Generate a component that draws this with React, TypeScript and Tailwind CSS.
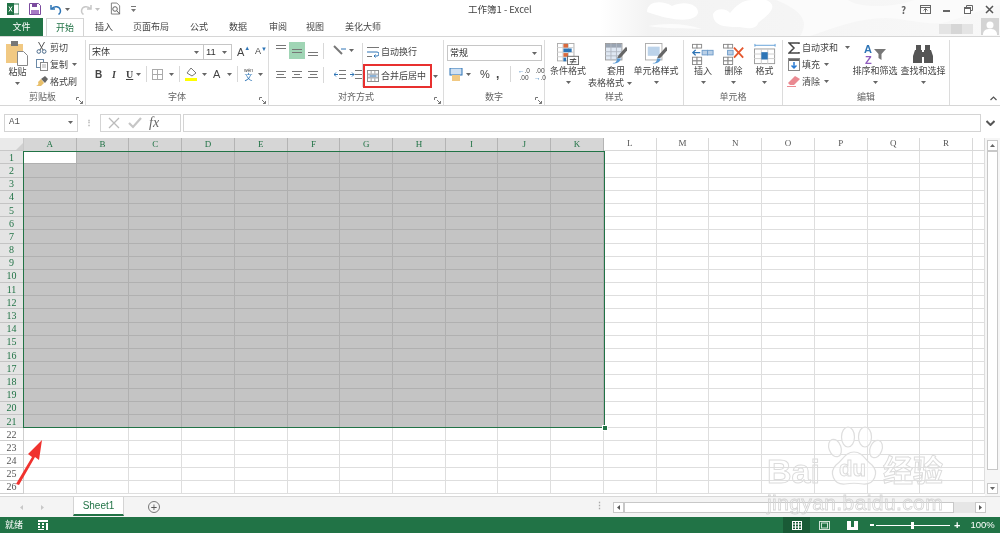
import React from "react";

const font = "font-['Noto_Sans_CJK_SC','Liberation_Sans',sans-serif]";
const Caret = ({ c = "" }: { c?: string }) => (
  <svg width="5" height="3" viewBox="0 0 5 3" className={"shrink-0 " + c}><path d="M0 0h5L2.500 3z" fill="#666" /></svg>
);
const Lines = ({ a = [10, 10, 10] }: { a?: number[] }) => (
  <span className="flex flex-col items-center gap-[2px]">
    {a.map((w, i) => <span key={i} className="h-px bg-[#777] block" style={{ width: w }} />)}
  </span>
);
const Sep = ({ c = "h-[16px]" }: { c?: string }) => <span className={"w-px bg-[#d8d8d8] shrink-0 " + c} />;
const Launcher = () => (
  <svg width="7" height="7" viewBox="0 0 7 7" className="shrink-0"><path d="M.5 3V.5H3M3 3l3.500 3.500M6.500 4v2.500H4" fill="none" stroke="#777" /></svg>
);

const Group = ({ w, label, launcher, children }: { w: string; label: string; launcher?: boolean; children: React.ReactNode }) => (
  <div className={"flex flex-col h-full border-r border-[#dcdcdc] shrink-0 " + w}>
    <div className="flex-1 flex min-h-0">{children}</div>
    <div className="h-[14px] flex items-center justify-center relative text-[9px] text-[#666] pb-[2px]">
      {label}
      {launcher && <span className="absolute right-[2px] bottom-[1px] flex"><Launcher /></span>}
    </div>
  </div>
);

const Big = ({ w, icon, l1, l2, caret2 }: { w: string; icon: React.ReactNode; l1: string; l2?: string; caret2?: boolean }) => (
  <div className={"flex flex-col items-center shrink-0 pt-[3px] " + w}>
    <div className="h-[22px] flex items-center justify-center">{icon}</div>
    <div className="text-[9px] leading-[12px] text-[#444] whitespace-nowrap">{l1}</div>
    {l2 ? (
      <div className="text-[9px] leading-[12px] text-[#444] whitespace-nowrap flex items-center gap-[3px] mr-[12px]">{l2}{caret2 && <Caret />}</div>
    ) : (
      <div className="h-[10px] flex items-center"><Caret /></div>
    )}
  </div>
);

const Small = ({ icon, label, caret, c = "" }: { icon: React.ReactNode; label: string; caret?: boolean; c?: string }) => (
  <div className={"flex items-center h-[17px] text-[9px] text-[#444] whitespace-nowrap " + c}>
    <span className="w-[17px] flex justify-center shrink-0">{icon}</span>
    {label}
    {caret && <Caret c="ml-[4px]" />}
  </div>
);

const Scissors = () => (
  <svg width="11" height="12" viewBox="0 0 11 12" fill="none" stroke="#4a6a8a"><path d="M2.500 0 7 8M8.500 0 4 8" stroke="#555" /><circle cx="2.800" cy="9.500" r="1.800" /><circle cx="8.200" cy="9.500" r="1.800" /></svg>
);
const CopyI = () => (
  <svg width="12" height="12" viewBox="0 0 12 12" fill="#fff" stroke="#6b8aa8"><rect x=".5" y=".5" width="7" height="8" /><rect x="4.500" y="3.500" width="7" height="8" stroke="#888" /><path d="M6 6h4M6 8h4" stroke="#aaa" /></svg>
);
const Brush = () => (
  <svg width="12" height="11" viewBox="0 0 12 11"><path d="M5 3l4-3 3 3-3 4z" fill="#666" /><path d="M5 3l3 4-3 3H0c2-1 3-2 2-4z" fill="#e8bf6a" /></svg>
);
const Paste = () => (
  <svg width="23" height="25" viewBox="0 0 23 25"><rect x="0" y="3" width="17" height="19" fill="#f1c983" /><rect x="5" y="0" width="7" height="5" fill="#777" /><path d="M11.500 10.500h6l4 4v10h-10z" fill="#fff" stroke="#888" /></svg>
);

const Sigma = () => <svg width="12" height="12" viewBox="0 0 12 12"><path d="M11 2V1H1l5 5-5 5h10v-1" fill="none" stroke="#444" strokeWidth="1.500" /></svg>;
const Fill = () => <svg width="12" height="13" viewBox="0 0 12 13"><rect x=".5" y=".5" width="11" height="12" fill="#fff" stroke="#888" /><rect x="1" y="1" width="10" height="2" fill="#666" /><path d="M6 4v6M3.500 7.500 6 10l2.500-2.500" fill="none" stroke="#2b7cd3" strokeWidth="1.500" /></svg>;
const Eraser = () => <svg width="13" height="11" viewBox="0 0 13 11"><path d="M8 0l5 3-6 6H3L1 7z" fill="#ea8a92" /><path d="M0 10.500h9" stroke="#ea8a92" /></svg>;

const GridI = ({ children }: { children?: React.ReactNode }) => (
  <svg width="22" height="22" viewBox="0 0 24 24">{children}</svg>
);

const CondFmt = () => (
  <GridI>
    <rect x=".5" y=".5" width="18" height="19" fill="#fff" stroke="#aaa" />
    <path d="M6.500 0v20M12.500 0v20M0 5h18M0 10h18M0 15h18" stroke="#ccc" />
    <rect x="7" y="1" width="5" height="4" fill="#d9693c" /><rect x="7" y="6" width="9" height="4" fill="#2e75b6" /><rect x="7" y="11" width="5" height="4" fill="#d9693c" /><rect x="7" y="16" width="3" height="4" fill="#2e75b6" />
    <rect x="11.500" y="14.500" width="12" height="9" fill="#fff" stroke="#666" />
    <path d="M14 18h7M14 20.500h7M19 16.500l-3 6" stroke="#444" fill="none" />
  </GridI>
);
const TableFmt = () => (
  <GridI>
    <rect x=".5" y=".5" width="18" height="18" fill="#dfe8f3" stroke="#999" />
    <rect x="1" y="1" width="17" height="4" fill="#9aa5b3" />
    <path d="M6.500 0v18M12.500 0v18M0 9.500h18M0 14h18" stroke="#b0b8c2" />
    <path d="M23 4 15 13l-2 4 4-1 8-9z" fill="#666" /><path d="M8 22c3 0 5-1 5-5l4 0c0 4-4 6-9 5z" fill="#5b9bd5" />
  </GridI>
);
const CellFmt = () => (
  <GridI>
    <rect x=".5" y=".5" width="18" height="18" fill="#fff" stroke="#aaa" />
    <rect x="3" y="4" width="13" height="10" fill="#bcd3ea" />
    <path d="M23 4 15 13l-2 4 4-1 8-9z" fill="#666" /><path d="M8 22c3 0 5-1 5-5l4 0c0 4-4 6-9 5z" fill="#5b9bd5" />
  </GridI>
);
const InsertI = () => (
  <GridI>
    <g fill="#fff" stroke="#888"><rect x=".5" y="1.500" width="5" height="4" /><rect x="5.500" y="1.500" width="5" height="4" /><rect x=".5" y="15.500" width="5" height="4" /><rect x="5.500" y="15.500" width="5" height="4" /><rect x=".5" y="19.500" width="5" height="4" /><rect x="5.500" y="19.500" width="5" height="4" /></g>
    <rect x="11" y="8" width="6" height="5" fill="#b9cfe6" stroke="#6b9ac9" /><rect x="17" y="8" width="6" height="5" fill="#b9cfe6" stroke="#6b9ac9" />
    <path d="M9 10.500H1M4 7.500l-3 3 3 3" fill="none" stroke="#2e75b6" strokeWidth="1.500" />
  </GridI>
);
const DeleteI = () => (
  <GridI>
    <g fill="#fff" stroke="#888"><rect x=".5" y="1.500" width="5" height="4" /><rect x="5.500" y="1.500" width="5" height="4" /><rect x=".5" y="15.500" width="5" height="4" /><rect x="5.500" y="15.500" width="5" height="4" /><rect x=".5" y="19.500" width="5" height="4" /><rect x="5.500" y="19.500" width="5" height="4" /></g>
    <rect x="5" y="8" width="6" height="5" fill="#b9cfe6" stroke="#6b9ac9" />
    <path d="M12 5l10 11M22 5 12 16" stroke="#e4572e" strokeWidth="2" />
  </GridI>
);
const FormatI = () => (
  <GridI>
    <path d="M1 2.500h22M1 1v3M23 1v3" stroke="#5b9bd5" />
    <rect x=".5" y="6.500" width="22" height="16" fill="#fff" stroke="#999" />
    <path d="M8 6v17M15 6v17M0 12h23M0 17h23" stroke="#ccc" />
    <rect x="8" y="10" width="7" height="8" fill="#2e75b6" />
  </GridI>
);
const SortI = () => (
  <svg width="22" height="22" viewBox="0 0 22 22">
    <text x="0" y="10" fontSize="11" fontWeight="700" fill="#2e75b6" fontFamily="Liberation Sans">A</text>
    <text x="1" y="21" fontSize="11" fontWeight="700" fill="#8e5bbd" fontFamily="Liberation Sans">Z</text>
    <path d="M10 6h12l-4.500 5v6l-3-2v-4z" fill="#777" />
  </svg>
);
const Bino = () => (
  <svg width="20" height="18" viewBox="0 0 20 18" fill="#555"><rect x="3" y="0" width="5" height="5" /><rect x="12" y="0" width="5" height="5" /><path d="M2 5h7v13H0V11zM11 5h7l2 6v7h-9zM9 7h2v5H9z" /></svg>
);

const Wrap = () => <svg width="12" height="12" viewBox="0 0 12 12" fill="none"><path d="M0 1.500h12M0 10.500h5" stroke="#777" /><path d="M0 6h10q2 0 2 2t-2 2H7M8.500 8.500 7 10l1.500 1.500" stroke="#2e75b6" /></svg>;
const Merge = () => <svg width="12" height="12" viewBox="0 0 13 13"><rect x=".5" y=".5" width="12" height="12" fill="#fff" stroke="#888" /><rect x="1" y="4" width="11" height="5" fill="#dbe6f2" /><path d="M1 4.500h11M1 8.500h11M4.500 1v3M8.500 1v3M4.500 9v3M8.500 9v3" stroke="#999" /><path d="M3 6.500h7" stroke="#2e75b6" /></svg>;

const Cols = ["A", "B", "C", "D", "E", "F", "G", "H", "I", "J", "K", "L", "M", "N", "O", "P", "Q", "R", ""];
const rows = Array.from({ length: 26 }, (_, i) => i + 1);

export default function App() {
  return (
    <div className={"relative w-[1000px] h-[533px] overflow-hidden bg-white flex flex-col text-[#444] blur-[0.4px] " + font}>
      {/* title bar */}
      <div className="h-[18px] shrink-0 flex items-center relative">
        <svg width="400" height="36" viewBox="0 0 400 36" className="absolute right-0 top-0">
          <defs>
            <linearGradient id="cl" x1="0" x2="1" y1="0" y2="0"><stop offset="0" stopColor="#f3f3f3" stopOpacity="0" /><stop offset="0.12" stopColor="#f3f3f3" /><stop offset="1" stopColor="#f8f8f8" /></linearGradient>
          </defs>
          <rect width="400" height="36" fill="url(#cl)" />
          <path d="M47 12C47 1 62 0 72 6 84 0 99 4 98 13 95 22 75 22 47 12z" fill="#fff" />
          <path d="M48 26c18-3 36-3 54 3-18-1-36 0-54-3z" fill="#fcfcfc" />
          <path d="M113 14c4-7 14-5 17-1 6-7 12-13 22-13h14c14 6 2 15-8 23-1 6-10 6-18 4-13 0-27 0-27-13z" fill="#fff" />
          <path d="M176 0h72c12 8 44 8 66 0h86v5c-30 8-34 12-58 18-14 2-42-5-56-5-28 0-52 10-76 18h-10c8-12 6-24-24-36z" fill="#fbfbfb" />
        </svg>
        <span className="w-[7px]" />
        <svg width="12" height="12" viewBox="0 0 12 12" className="relative"><rect x="3" y="1" width="9" height="10" fill="#fff" stroke="#217346" /><rect width="7" height="12" fill="#217346" /><path d="M2 3.500 5 8.500M5 3.500 2 8.500" stroke="#fff" /></svg>
        <span className="w-[10px]" />
        <svg width="12" height="12" viewBox="0 0 12 12"><path d="M.5.500h9l2 2v9H.5z" fill="#fff" stroke="#7b4b9e" /><rect x="3" y="1" width="5" height="3" fill="#7b4b9e" /><rect x="2" y="7" width="8" height="4" fill="#a67bc4" /></svg>
        <span className="w-[9px]" />
        <svg width="12" height="11" viewBox="0 0 12 11" fill="none"><path d="M1 1v4h4" stroke="#2e75b6" strokeWidth="1.500" /><path d="M1.500 5C4 1.500 10 2 10.500 7c0 1.500-1 3-2 3.500" stroke="#2e75b6" strokeWidth="1.500" /></svg>
        <Caret c="ml-[3px]" />
        <span className="w-[10px]" />
        <svg width="12" height="11" viewBox="0 0 12 11" fill="none"><path d="M11 1v4H7M10.500 5C8 1.500 2 2 1.500 7c0 1.500 1 3 2 3.500" stroke="#c8c8c8" strokeWidth="1.500" /></svg>
        <Caret c="ml-[3px] opacity-40" />
        <span className="w-[10px]" />
        <svg width="11" height="14" viewBox="0 0 12 14" fill="none"><path d="M1.500.5h6l3 3v9h-9z" fill="#fff" stroke="#777" /><circle cx="5.500" cy="7" r="2.500" stroke="#555" /><path d="M7.500 9l3 3.500" stroke="#555" /></svg>
        <span className="w-[10px]" />
        <svg width="5" height="6" viewBox="0 0 5 6"><path d="M0 0h5v1H0zM0 3h5L2.500 6z" fill="#777" /></svg>
        <span className="absolute left-[468px] text-[9.5px] text-[#444]">工作簿1 - Excel</span>
        <span className="ml-auto flex items-center text-[#666] relative">
          <span className="w-[15px] text-[10px] font-bold">?</span>
          <svg width="11" height="9" viewBox="0 0 11 9" className="mr-[12px] ml-[4px]" fill="none"><rect x=".5" y=".5" width="10" height="8" stroke="#666" /><path d="M.5 2.500h10" stroke="#666" /><path d="M5.500 7.500V4M3.500 5.500l2-2 2 2" stroke="#666" /></svg>
          <span className="w-[7px] h-[2px] bg-[#666] mr-[14px] mt-[3px]" />
          <svg width="9" height="9" viewBox="0 0 9 9" className="mr-[12px]" fill="none"><path d="M2.500 2V.5h6v5H7" stroke="#666" /><rect x=".5" y="2.500" width="6" height="6" stroke="#666" fill="#fff" /><path d="M.5 3.500h6" stroke="#666" /></svg>
          <svg width="9" height="9" viewBox="0 0 9 9" className="mr-[4px]"><path d="M1 1l7 7M8 1 1 8" stroke="#555" strokeWidth="1.500" /></svg>
          <span className="w-[2px]" />
        </span>
      </div>
      {/* tabs */}
      <div className="h-[18px] shrink-0 flex items-end relative text-[9px] text-[#444]">
        <div className="w-[43px] h-[18px] bg-[#217346] text-white flex items-center justify-center">文件</div>
        <div className="ml-[3px] w-[38px] h-[18px] bg-white border border-b-0 border-[#d4d4d4] text-[#217346] flex items-center justify-center">开始</div>
        <div className="w-[40px] h-[18px] flex items-center justify-center">插入</div>
        <div className="w-[54px] h-[18px] flex items-center justify-center">页面布局</div>
        <div className="w-[42px] h-[18px] flex items-center justify-center">公式</div>
        <div className="w-[36px] h-[18px] flex items-center justify-center">数据</div>
        <div className="w-[44px] h-[18px] flex items-center justify-center">审阅</div>
        <div className="w-[30px] h-[18px] flex items-center justify-center">视图</div>
        <div className="w-[66px] h-[18px] flex items-center justify-center">美化大师</div>
        <div className="absolute right-[27px] bottom-[2px] flex gap-0">
          <span className="w-[12px] h-[10px] bg-[#e4e4e4]" /><span className="w-[11px] h-[10px] bg-[#d6d6d6]" /><span className="w-[11px] h-[10px] bg-[#e4e4e4]" />
        </div>
        <div className="absolute right-[1px] top-0 w-[18px] h-[17px] bg-[#d4d4d4] flex items-end justify-center overflow-hidden">
          <svg width="16" height="15" viewBox="0 0 16 15"><circle cx="8" cy="5" r="3.500" fill="#fff" /><path d="M1 15c0-5 3-6 7-6s7 1 7 6z" fill="#fff" /></svg>
        </div>
      </div>
      {/* ribbon */}
      <div className="h-[70px] shrink-0 flex border-y border-[#d6d6d6] pt-[3px] relative bg-white">
        <Group w="w-[86px]" label="剪贴板" launcher>
          <div className="w-[33px] flex flex-col items-center pt-[1px] pl-[2px]">
            <Paste />
            <div className="text-[9px] leading-[12px]">粘贴</div>
            <div className="h-[10px] flex items-center"><Caret /></div>
          </div>
          <div className="flex flex-col -mt-[1px]">
            <Small icon={<Scissors />} label="剪切" />
            <Small icon={<CopyI />} label="复制" caret />
            <Small icon={<Brush />} label="格式刷" />
          </div>
        </Group>
        <Group w="w-[183px]" label="字体" launcher>
          <div className="flex flex-col pl-[3px] pt-[4px]">
            <div className="flex items-center h-[16px]">
              <div className="w-[115px] h-[16px] border border-[#c6c6c6] flex items-center px-[2px] text-[9px] text-[#333]">宋体<Caret c="ml-auto mr-[2px]" /></div>
              <div className="w-[28px] h-[16px] border border-l-0 border-[#c6c6c6] flex items-center px-[2px] text-[9.5px] text-[#333] font-['Liberation_Sans']">11<Caret c="ml-auto mr-[2px]" /></div>
              <span className="ml-[5px] text-[11px] font-['Liberation_Sans'] w-[18px] flex items-start">A<span className="text-[6px] text-[#2e75b6] leading-[8px]">▲</span></span>
              <span className="text-[9px] font-['Liberation_Sans'] w-[14px] flex items-start">A<span className="text-[6px] text-[#2e75b6] leading-[8px]">▼</span></span>
            </div>
            <div className="flex items-center h-[18px] mt-[5px] text-[#444] font-['Liberation_Serif']">
              <span className="w-[16px] pl-[5px] ml-[1px] text-[10px] font-bold font-['Liberation_Sans']">B</span>
              <span className="w-[17px] pl-[6px] text-[10px] font-bold italic">I</span>
              <span className="w-[13px] pl-[3px] text-[10px] font-bold underline">U</span>
              <Caret c="mr-[5px]" />
              <Sep />
              <svg width="11" height="11" viewBox="0 0 11 11" className="ml-[5px]" fill="none"><rect x=".5" y=".5" width="10" height="10" stroke="#aaa" /><path d="M5.500 0v11M0 5.500h11" stroke="#aaa" /></svg>
              <Caret c="ml-[6px] mr-[5px]" />
              <Sep />
              <svg width="13" height="13" viewBox="0 0 13 13" className="ml-[5px]"><path d="M6 0l5 5-4 3-5-3z" fill="#fff" stroke="#777" /><rect y="10" width="12" height="3" fill="#ffff00" /></svg>
              <Caret c="ml-[4px] mr-[5px]" />
              <span className="text-[11px] font-['Liberation_Sans'] w-[9px] ml-[1px]">A</span>
              <Caret c="ml-[5px] mr-[5px]" />
              <Sep />
              <span className="w-[15px] ml-[3px] flex flex-col items-center leading-[6px] text-[5px] font-['Liberation_Sans']">wén<span className="text-[8px] leading-[8px] text-[#2e75b6] font-['Noto_Sans_CJK_SC']">文</span></span>
              <Caret c="ml-[2px]" />
            </div>
          </div>
        </Group>
        <Group w="w-[175px]" label="对齐方式" launcher>
          <div className="flex flex-col pl-[3px] pt-[2px]">
            <div className="flex items-center h-[17px]">
              <span className="w-[17px] h-[17px] flex justify-center pt-[3px]"><Lines a={[10, 10]} /></span>
              <span className="w-[16px] h-[17px] bg-[#a0d5b5] flex items-center justify-center"><Lines a={[10, 10]} /></span>
              <span className="w-[16px] h-[17px] flex justify-center items-end pb-[3px]"><Lines a={[10, 10]} /></span>
              <Sep c="h-[16px] ml-[2px]" />
              <svg width="13" height="12" viewBox="0 0 13 12" className="ml-[9px]" fill="none"><path d="M1 1l8 8" stroke="#777" strokeWidth="2" /><path d="M8 4h5" stroke="#2e75b6" /></svg>
              <Caret c="ml-[3px]" />
            </div>
            <div className="flex items-center h-[17px] mt-[7px]">
              <span className="w-[17px] flex justify-center"><Lines a={[10, 7, 10]} /></span>
              <span className="w-[16px] flex justify-center"><Lines a={[10, 6, 10]} /></span>
              <span className="w-[16px] flex justify-center"><Lines a={[10, 7, 10]} /></span>
              <Sep c="h-[16px] ml-[2px]" />
              <svg width="12" height="9" viewBox="0 0 12 9" className="ml-[10px]" fill="none"><path d="M5 .5h7M5 4.500h7M5 8.500h7" stroke="#777" /><path d="M4 4.500H0M2 2.500l-2 2 2 2" stroke="#2e75b6" /></svg>
              <svg width="12" height="9" viewBox="0 0 12 9" className="ml-[4px]" fill="none"><path d="M5 .5h7M5 4.500h7M5 8.500h7" stroke="#777" /><path d="M0 4.500h4M2 2.500l2 2-2 2" stroke="#2e75b6" /></svg>
            </div>
          </div>
          <Sep c="h-[44px] mt-[3px]" />
          <div className="flex flex-col pt-[3px]">
            <div className="flex items-center h-[17px] text-[9px] ml-[4px] whitespace-nowrap"><span className="w-[14px] flex"><Wrap /></span>自动换行</div>
            <div className="flex items-center mt-[4px]">
              <div className="w-[69px] h-[24px] border-2 border-[#e8302f] flex items-center pl-[2px] text-[9px] whitespace-nowrap">
                <span className="w-[14px] flex"><Merge /></span>合并后居中
              </div>
              <Caret c="ml-[1px]" />
            </div>
          </div>
        </Group>
        <Group w="w-[101px]" label="数字" launcher>
          <div className="flex flex-col pl-[3px] pt-[5px]">
            <div className="w-[95px] h-[16px] border border-[#c6c6c6] flex items-center px-[2px] text-[9px] text-[#333]">常规<Caret c="ml-auto mr-[2px]" /></div>
            <div className="flex items-center h-[18px] mt-[4px] font-['Liberation_Sans']">
              <svg width="14" height="13" viewBox="0 0 14 13" className="ml-[2px]"><rect x="1" width="12" height="7" fill="#cfe0f2" stroke="#2e75b6" /><rect x="3" y="7" width="8" height="6" fill="#f1c983" /></svg>
              <Caret c="ml-[3px]" />
              <span className="text-[11px] ml-[9px] w-[15px]">%</span>
              <span className="text-[12px] font-bold ml-[1px] w-[14px]">,</span>
              <Sep />
              <span className="ml-[5px] w-[16px] text-[6.5px] leading-[7px] text-center"><span className="text-[#2e75b6]">←</span>.0<br />.00</span>
              <span className="w-[16px] text-[6.5px] leading-[7px] text-center">.00<br /><span className="text-[#2e75b6]">→</span>.0</span>
            </div>
          </div>
        </Group>
        <Group w="w-[139px]" label="样式">
          <Big w="w-[46px]" icon={<CondFmt />} l1="条件格式" />
          <Big w="w-[50px]" icon={<TableFmt />} l1="套用" l2="表格格式" caret2 />
          <Big w="w-[30px]" icon={<CellFmt />} l1="单元格样式" />
        </Group>
        <Group w="w-[99px]" label="单元格">
          <div className="w-[4px]" />
          <Big w="w-[30px]" icon={<InsertI />} l1="插入" />
          <Big w="w-[31px]" icon={<DeleteI />} l1="删除" />
          <Big w="w-[31px]" icon={<FormatI />} l1="格式" />
        </Group>
        <Group w="w-[167px]" label="编辑">
          <div className="flex flex-col w-[70px] pl-[2px] -mt-[1px]">
            <Small icon={<Sigma />} label="自动求和" caret c="[&>svg]:ml-[7px]" />
            <Small icon={<Fill />} label="填充" caret />
            <Small icon={<Eraser />} label="清除" caret />
          </div>
          <Big w="w-[44px]" icon={<SortI />} l1="排序和筛选" />
          <Big w="w-[52px]" icon={<Bino />} l1="查找和选择" />
        </Group>
        <svg width="7" height="5" viewBox="0 0 7 5" className="absolute right-[3px] bottom-[4px]" fill="none"><path d="M.5 4l3-3 3 3" stroke="#555" strokeWidth="1.200" /></svg>
      </div>
      {/* formula bar */}
      <div className="shrink-0 flex items-center pt-[7px] pb-[6px] h-[32px]">
        <div className="ml-[4px] w-[74px] h-[18px] border border-[#d4d4d4] flex items-center px-[4px] text-[9px] text-[#555] font-['Liberation_Mono']">A1<Caret c="ml-auto" /></div>
        <div className="w-[22px] flex justify-center text-[#aaa] text-[8px] font-bold font-['Liberation_Sans']">⋮</div>
        <div className="w-[81px] h-[18px] border border-[#d4d4d4] flex items-center">
          <svg width="12" height="12" viewBox="0 0 12 12" className="ml-[7px]"><path d="M1 1l10 10M11 1 1 11" stroke="#bbb" strokeWidth="1.300" /></svg>
          <svg width="14" height="12" viewBox="0 0 14 12" className="ml-[8px]"><path d="M1 6l4 4 8-9" stroke="#c6c6c6" strokeWidth="2.200" fill="none" /></svg>
          <span className="ml-[7px] text-[14px] leading-[14px] italic font-['Liberation_Serif'] text-[#666]">fx</span>
        </div>
        <div className="ml-[2px] w-[798px] h-[18px] border border-[#d4d4d4]" />
        <svg width="9" height="6" viewBox="0 0 9 6" className="ml-[5px]" fill="none"><path d="M.5 1l4 4 4-4" stroke="#555" strokeWidth="2" /></svg>
      </div>
      {/* sheet */}
      <div className="h-[358px] shrink-0 flex relative overflow-hidden">
        <div className="w-[985px] shrink-0 grid grid-cols-[24px_repeat(18,52.72px)_12px] auto-rows-[13.19px] overflow-hidden content-start">
          <div className="bg-[#eaeaea] border-b border-r border-[#c8c8c8] flex items-end justify-end">
            <svg width="7" height="7" viewBox="0 0 7 7"><path d="M7 0v7H0z" fill="#d0d0d0" /></svg>
          </div>
          {Cols.map((c, i) => (
            <div key={i} className={i < 11
              ? "bg-[#d6d6d6] border-r border-[#b4b4b4] flex items-center justify-center text-[9px] text-[#217346] font-['Liberation_Serif']"
              : "bg-white border-r border-b border-[#d8d8d8] flex items-center justify-center text-[9px] text-[#555] font-['Liberation_Serif']"}>{c}</div>
          ))}
          {rows.map((r) => (
            <React.Fragment key={r}>
              <div className={r <= 21
                ? "bg-[#e4e4e4] border-r border-b border-[#c4c4c4] flex items-center justify-center text-[10px] text-[#217346] font-['Liberation_Serif']"
                : "bg-white border-r border-b border-[#cfcfcf] flex items-center justify-center text-[10px] text-[#555] font-['Liberation_Serif']"}>{r}</div>
              {Cols.map((c, i) => {
                const sel = r <= 21 && i < 11;
                const active = r === 1 && i === 0;
                return (
                  <div key={i} className={active ? "bg-white border-r border-b border-[#b0b0b0]" : sel ? "bg-[#c4c4c4] border-r border-b border-[#b0b0b0]" : "bg-white border-r border-b border-[#dedede]"} />
                );
              })}
            </React.Fragment>
          ))}
        </div>
        <div className="flex-1 flex flex-col bg-[#f6f6f6] px-[2px] pt-[2px]">
          <div className="h-[11px] bg-white border border-[#c8c8c8] flex items-center justify-center"><svg width="5" height="3" viewBox="0 0 5 3"><path d="M2.500 0 5 3H0z" fill="#666" /></svg></div>
          <div className="h-[319px] bg-white border border-[#c8c8c8]" />
          <div className="flex-1" />
          <div className="h-[11px] mb-[2px] bg-white border border-[#c8c8c8] flex items-center justify-center"><Caret /></div>
        </div>
        {/* selection outline */}
        <div className="absolute left-[23px] top-[13px] w-[582px] h-[277px] border border-[#217346] pointer-events-none" />
        <div className="absolute left-[602px] top-[287px] w-[4px] h-[4px] bg-[#217346] border border-white box-content" />
      </div>
      {/* sheet tabs */}
      <div className="h-[21px] shrink-0 flex items-center bg-[#f4f4f4] border-t border-[#d8d8d8]">
        <svg width="3" height="5" viewBox="0 0 3 5" className="ml-[20px]"><path d="M3 0v5L0 2.500z" fill="#c8c8c8" /></svg>
        <svg width="3" height="5" viewBox="0 0 3 5" className="ml-[18px]"><path d="M0 0v5l3-2.500z" fill="#c8c8c8" /></svg>
        <div className="ml-[29px] w-[51px] h-[19px] bg-white border-x border-[#d4d4d4] border-b-2 border-b-[#217346] text-[#217346] text-[10px] flex items-center justify-center font-['Liberation_Sans'] self-start">Sheet1</div>
        <div className="ml-[24px] w-[12px] h-[12px] rounded-full border border-[#777] flex items-center justify-center text-[11px] leading-none text-[#555] font-['Liberation_Sans']">+</div>
        <span className="ml-[435px] text-[#aaa] text-[9px] font-bold font-['Liberation_Sans']">⋮</span>
        <div className="ml-[9px] w-[11px] h-[11px] bg-white border border-[#c8c8c8] flex items-center justify-center"><svg width="3" height="5" viewBox="0 0 3 5"><path d="M3 0v5L0 2.500z" fill="#555" /></svg></div>
        <div className="w-[330px] h-[11px] bg-white border border-[#c8c8c8]" />
        <div className="w-[21px] h-[11px] bg-[#e6e6e6]" />
        <div className="w-[11px] h-[11px] bg-white border border-[#c8c8c8] flex items-center justify-center"><svg width="3" height="5" viewBox="0 0 3 5"><path d="M0 0v5l3-2.500z" fill="#555" /></svg></div>
      </div>
      {/* status bar */}
      <div className="flex-1 bg-[#217346] text-white flex items-center text-[9px] relative">
        <span className="ml-[5px]">就绪</span>
        <svg width="10" height="10" viewBox="0 0 10 10" className="ml-[15px]"><path d="M0 0h10v2H0zM0 3h2v2H0zM4 3h2v2H4zM8 3h2v7H8zM0 6h2v2H0zM4 6h2v2H4zM0 9h6v1H0z" fill="#fff" /></svg>
        <span className="ml-[735px] w-[27px] h-[16px] bg-[#195a36] flex items-center justify-center">
          <svg width="10" height="9" viewBox="0 0 10 9" fill="none"><rect x=".5" y=".5" width="9" height="8" stroke="#fff" /><path d="M3.500 0v9M6.500 0v9M0 3h10M0 6h10" stroke="#fff" /></svg>
        </span>
        <svg width="11" height="9" viewBox="0 0 11 9" className="ml-[9px]" fill="none"><rect x=".5" y=".5" width="10" height="8" stroke="#cfe3d7" /><rect x="2.500" y="2" width="6" height="5" stroke="#cfe3d7" /></svg>
        <svg width="11" height="9" viewBox="0 0 11 9" className="ml-[17px]"><path d="M0 0h11v9H0z" fill="#fff" /><path d="M4 0h3v6H4z" fill="#217346" /></svg>
        <span className="ml-[12px] w-[4px] h-[2px] bg-white" />
        <span className="ml-[2px] w-[74px] h-px bg-white relative"><span className="absolute left-[35px] -top-[3px] w-[3px] h-[7px] bg-white" /></span>
        <span className="ml-[4px] text-[11px] font-bold font-['Liberation_Sans'] leading-none">+</span>
        <span className="ml-[10px] text-[9.5px] font-['Liberation_Sans']">100%</span>
      </div>
      {/* annotation arrow */}
      <svg width="40" height="60" viewBox="0 0 40 60" className="absolute left-[10px] top-[432px]">
        <path d="M6 52 22 25l-4-3 14-14-3 20-4-3L9 53z" fill="#f0322e" />
      </svg>
      {/* watermark */}
      <div className="absolute left-[765px] top-[423px] w-[220px] h-[100px] pointer-events-none">
        <svg width="130" height="72" viewBox="0 0 130 72" className="absolute left-0 top-0" fill="#ffffff90" stroke="#dedede" strokeWidth="1.200">
          <ellipse cx="70" cy="25" rx="6" ry="9" transform="rotate(-20 70 25)" />
          <ellipse cx="83" cy="14" rx="6.500" ry="10" />
          <ellipse cx="100" cy="14" rx="6.500" ry="10" />
          <ellipse cx="111" cy="26" rx="6" ry="9" transform="rotate(20 111 26)" />
          <path d="M89 29c9 0 11 8 18 13 7 7 3 20-9 19-6-1-12-1-18 0-12 1-16-12-9-19 7-5 9-13 18-13z" />
        </svg>
        <span className="absolute left-[2px] top-[28px] text-[34px] leading-[40px] font-bold text-transparent [-webkit-text-stroke:1px_#dcdcdc] font-['Liberation_Sans']">Bai</span>
        <span className="absolute left-[74px] top-[35px] text-[22px] leading-[22px] font-bold text-transparent [-webkit-text-stroke:1px_#dcdcdc] font-['Liberation_Sans']">du</span>
        <span className="absolute left-[118px] top-[29px] text-[30px] leading-[32px] font-bold text-transparent [-webkit-text-stroke:1px_#dcdcdc]">经验</span>
        <span className="absolute left-[2px] top-[68px] text-[21px] leading-[24px] text-transparent [-webkit-text-stroke:0.8px_#d4d4d4] font-['Liberation_Sans'] tracking-[0.4px]">jingyan.baidu.com</span>
      </div>
    </div>
  );
}
